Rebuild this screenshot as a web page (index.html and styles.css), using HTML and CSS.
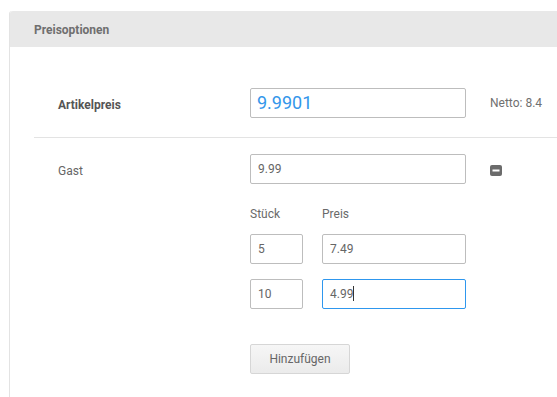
FILE: index.html
```html
<!DOCTYPE html>
<html>
<head>
<meta charset="utf-8">
<link rel="stylesheet" href="styles.css">
</head>
<body>
<div class="panel">
  <div class="panel-head">Preisoptionen</div>
  <div class="panel-body">
    <div class="row row-main">
      <div class="label strong">Artikelpreis</div>
      <div class="field"><div class="input big">9.9901</div></div>
      <div class="side">Netto: 8.4</div>
    </div>
    <div class="row row-group">
      <div class="label">Gast</div>
      <div class="field">
        <div class="input">9.99</div>
        <div class="tiers">
          <div class="tier-head"><span class="qty-col">Stück</span><span>Preis</span></div>
          <div class="tier"><div class="input qty">5</div><div class="input price">7.49</div></div>
          <div class="tier"><div class="input qty">10</div><div class="input price focus">4.99<span class="caret"></span></div></div>
        </div>
        <div class="btn">Hinzufügen</div>
      </div>
      <div class="side icon-side">
        <svg width="12" height="11" viewBox="0 0 12 11"><rect x="0" y="0" width="12" height="11" rx="2" fill="#6b6b6b"/><rect x="2.5" y="4.5" width="7" height="2" fill="#fff"/></svg>
      </div>
    </div>
  </div>
</div>
</body>
</html>
```
FILE: styles.css
```css
html, body { margin: 0; padding: 0; background: #fff; }
body {
  font-family: Roboto, "Noto Sans", sans-serif;
  font-size: 12px;
  color: #666;
  padding: 11px 0 0 9px;
  overflow: hidden;
  height: 397px;
  box-sizing: border-box;
}
.panel {
  width: 600px;
  border-left: 1px solid #e3e3e3;
  border-top-left-radius: 3px;
  height: 400px;
}
.panel-head {
  background: #e8e8e8;
  height: 36px;
  line-height: 38px;
  padding-left: 24px;
  font-weight: bold;
  color: #6f6f6f;
  border-top-left-radius: 3px;
}
.panel-body { padding-left: 24px; padding-top: 41px; }
.row {
  display: grid;
  grid-template-columns: 192px 216px auto;
  column-gap: 24px;
}
.row-main {
  padding-bottom: 19px;
  border-bottom: 1px solid #e3e3e3;
  align-items: center;
}
.row-main .label { padding-top: 3px; }
.row-group { padding-top: 16px; }
.label { padding-left: 24px; color: #666; }
.row-group .label { line-height: 30px; padding-top: 2px; }
.strong { font-weight: bold; color: #555; }
.input {
  box-sizing: border-box;
  height: 30px;
  border: 1px solid #bdbdbd;
  border-radius: 2px;
  padding: 0 7px;
  line-height: 28px;
  color: #666;
  font-size: 12px;
  background: #fff;
}
.input.big { font-size: 18px; color: #3396ea; padding: 0 6px; }
.side { color: #707070; }
.icon-side { height: 30px; display: flex; align-items: center; padding-top: 3px; box-sizing: border-box; }
.icon-side svg { display: block; }
.tiers { padding-top: 23px; }
.tier-head { display: flex; line-height: 14px; color: #6a6a6a; margin-bottom: 13px; }
.qty-col { width: 72px; }
.tier { display: flex; gap: 19px; margin-bottom: 15px; }
.input.qty { width: 53px; }
.input.price { width: 144px; }
.input.focus { border-color: #2e97ee; }
.caret { display: inline-block; width: 1px; height: 15px; background: #333; vertical-align: -3px; }
.btn {
  margin-top: 35px;
  width: 100px;
  height: 30px;
  box-sizing: border-box;
  border: 1px solid #d6d6d6;
  border-radius: 2px;
  background: linear-gradient(#f6f6f6, #ebebeb);
  text-align: center;
  line-height: 28px;
  color: #666;
  font-size: 12px;
}
```
